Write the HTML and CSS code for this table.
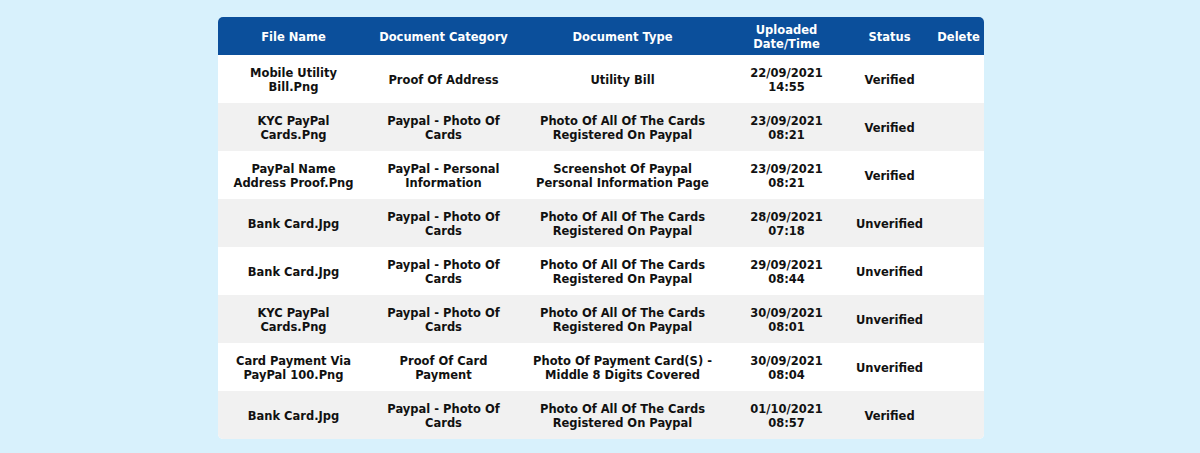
FILE: index.html
```html
<!DOCTYPE html>
<html>
<head>
<meta charset="utf-8">
<link rel="stylesheet" href="styles.css">
</head>
<body>
<div class="wrap">
<table class="docs">
<thead>
<tr>
<th class="c1">File Name</th>
<th class="c2">Document Category</th>
<th class="c3">Document Type</th>
<th class="c4">Uploaded<br>Date/Time</th>
<th class="c5">Status</th>
<th class="c6">Delete</th>
</tr>
</thead>
<tbody>
<tr><td>Mobile Utility<br>Bill.Png</td><td>Proof Of Address</td><td>Utility Bill</td><td>22/09/2021<br>14:55</td><td>Verified</td><td></td></tr>
<tr><td>KYC PayPal<br>Cards.Png</td><td>Paypal - Photo Of<br>Cards</td><td>Photo Of All Of The Cards<br>Registered On Paypal</td><td>23/09/2021<br>08:21</td><td>Verified</td><td></td></tr>
<tr><td>PayPal Name<br>Address Proof.Png</td><td>PayPal - Personal<br>Information</td><td>Screenshot Of Paypal<br>Personal Information Page</td><td>23/09/2021<br>08:21</td><td>Verified</td><td></td></tr>
<tr><td>Bank Card.Jpg</td><td>Paypal - Photo Of<br>Cards</td><td>Photo Of All Of The Cards<br>Registered On Paypal</td><td>28/09/2021<br>07:18</td><td>Unverified</td><td></td></tr>
<tr><td>Bank Card.Jpg</td><td>Paypal - Photo Of<br>Cards</td><td>Photo Of All Of The Cards<br>Registered On Paypal</td><td>29/09/2021<br>08:44</td><td>Unverified</td><td></td></tr>
<tr><td>KYC PayPal<br>Cards.Png</td><td>Paypal - Photo Of<br>Cards</td><td>Photo Of All Of The Cards<br>Registered On Paypal</td><td>30/09/2021<br>08:01</td><td>Unverified</td><td></td></tr>
<tr><td>Card Payment Via<br>PayPal 100.Png</td><td>Proof Of Card<br>Payment</td><td>Photo Of Payment Card(S) -<br>Middle 8 Digits Covered</td><td>30/09/2021<br>08:04</td><td>Unverified</td><td></td></tr>
<tr><td>Bank Card.Jpg</td><td>Paypal - Photo Of<br>Cards</td><td>Photo Of All Of The Cards<br>Registered On Paypal</td><td>01/10/2021<br>08:57</td><td>Verified</td><td></td></tr>
</tbody>
</table>
</div>
</body>
</html>
```

FILE: styles.css
```css
html, body {
  margin: 0;
  padding: 0;
  background: #d8f1fc;
}
body {
  font-family: "DejaVu Sans", Verdana, sans-serif;
  font-weight: bold;
  font-size: 11.5px;
  color: #111;
}
.wrap {
  padding-top: 17px;
  display: flex;
  justify-content: center;
}
.docs {
  margin-left: 1px;
  width: 766px;
  border-collapse: separate;
  border-spacing: 0;
  table-layout: fixed;
  border-radius: 5px;
  overflow: hidden;
  background: #fff;
}
.docs th {
  background: #0b4f9b;
  color: #fff;
  height: 38px;
  box-sizing: border-box;
  padding: 2px 0 0;
  line-height: 14px;
  text-align: center;
  vertical-align: middle;
  font-weight: bold;
}
.docs td {
  height: 48px;
  box-sizing: border-box;
  padding: 1px 0 0;
  line-height: 14px;
  text-align: center;
  vertical-align: middle;
}
.docs tbody tr:nth-child(even) td {
  background: #f1f1f1;
}
.c1 { width: 152px; }
.c2 { width: 148px; }
.c3 { width: 210px; }
.c4 { width: 118px; }
.c5 { width: 88px; }
.c6 { width: 50px; }
```
